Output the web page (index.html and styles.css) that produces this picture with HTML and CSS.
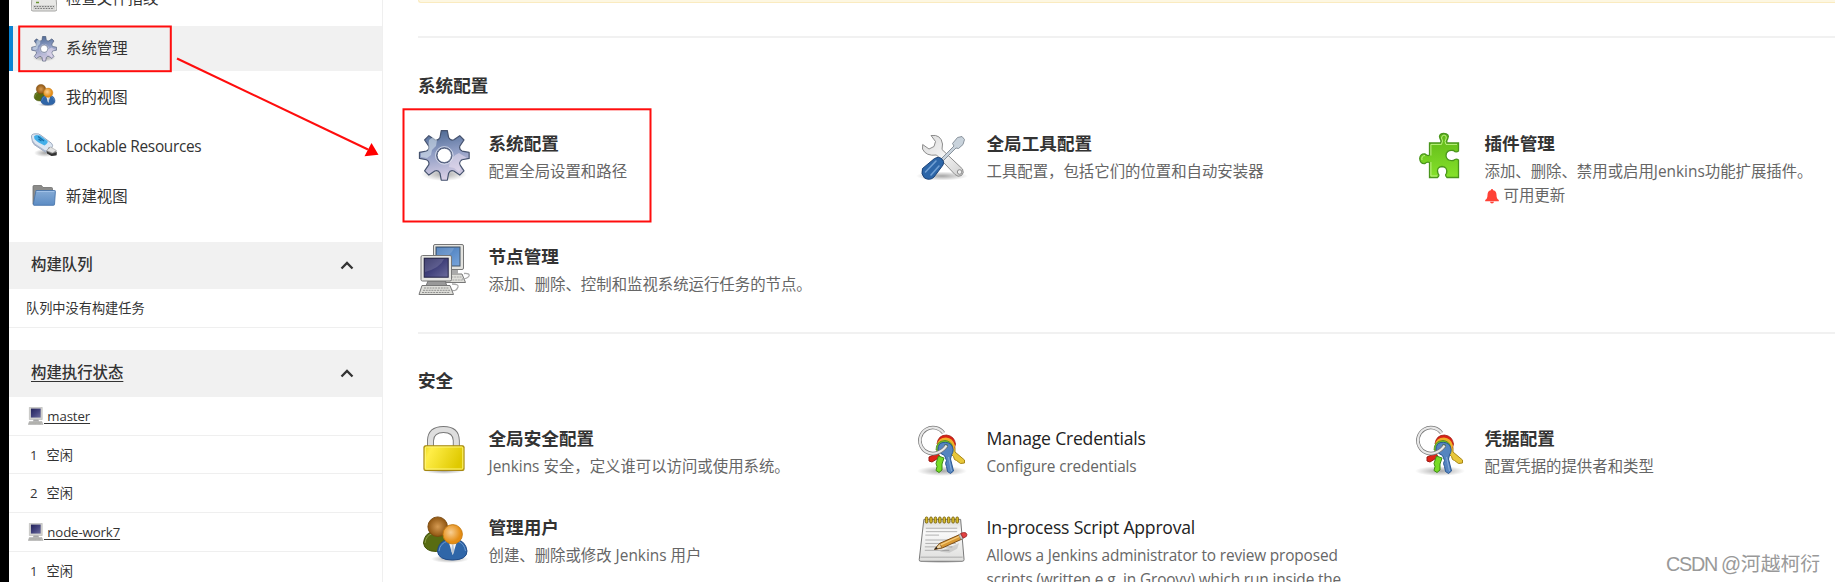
FILE: index.html
```html
<!DOCTYPE html>
<html lang="zh-CN">
<head>
<meta charset="utf-8">
<title>系统管理 [Jenkins]</title>
<link rel="stylesheet" href="styles.css">
</head>
<body>
<svg class="defs" width="0" height="0" aria-hidden="true">
  <defs>
    <linearGradient id="gGear" x1="0" y1="0" x2="0.15" y2="1"><stop offset="0" stop-color="#46648f"/><stop offset=".5" stop-color="#8f9dc4"/><stop offset="1" stop-color="#d6cde4"/></linearGradient>
    <linearGradient id="gBlue" x1="0" y1="0" x2="1" y2="1"><stop offset="0" stop-color="#3f73b4"/><stop offset="1" stop-color="#78a5dc"/></linearGradient>
    <linearGradient id="gFolder" x1="0" y1="0" x2="0" y2="1"><stop offset="0" stop-color="#85abd6"/><stop offset="1" stop-color="#5c8cc4"/></linearGradient>
    <linearGradient id="gNavy" x1="0" y1="0" x2="1" y2="1"><stop offset="0" stop-color="#23235a"/><stop offset=".5" stop-color="#42427c"/><stop offset="1" stop-color="#6c6c9c"/></linearGradient>
    <linearGradient id="gSteel" x1="0" y1="0" x2="1" y2="1"><stop offset="0" stop-color="#d9d9d9"/><stop offset=".5" stop-color="#f3f3f3"/><stop offset="1" stop-color="#cfcfcf"/></linearGradient>
    <linearGradient id="gGold" x1="0" y1="0" x2="1" y2=".3"><stop offset="0" stop-color="#e9d51c"/><stop offset=".2" stop-color="#ffee48"/><stop offset="1" stop-color="#dfc900"/></linearGradient>
    <linearGradient id="gGreen" x1="0" y1="0" x2="0" y2="1"><stop offset="0" stop-color="#5fb717"/><stop offset="1" stop-color="#86e22b"/></linearGradient>
    <linearGradient id="gPage" x1="0" y1="0" x2="0" y2="1"><stop offset="0" stop-color="#d8d8d6"/><stop offset=".3" stop-color="#fafafa"/><stop offset="1" stop-color="#dededc"/></linearGradient>
    <radialGradient id="gBrown"><stop offset="0" stop-color="#d59a52"/><stop offset="1" stop-color="#8f5510"/></radialGradient>
    <radialGradient id="gOrange" cx=".4" cy=".4"><stop offset="0" stop-color="#f8cf94"/><stop offset="1" stop-color="#e58d14"/></radialGradient>
    <radialGradient id="gShadow"><stop offset="0" stop-color="#000" stop-opacity=".35"/><stop offset="1" stop-color="#000" stop-opacity="0"/></radialGradient>
  </defs>
  <symbol id="gear" viewBox="0 0 52 52">
    <ellipse cx="26" cy="44" rx="23" ry="7" fill="url(#gShadow)"/>
    <path transform="translate(26.3 25.4) scale(1.08)" fill="url(#gGear)" stroke="#46536f" stroke-width="1.1" stroke-linejoin="round" fill-rule="evenodd" d="M-4-16.5L-2.8-23H2.8L4-16.5Q5.5-13.3 8.84-14.5L14.28-18.24 18.24-14.28 14.5-8.84Q13.3-5.5 16.5-4L23-2.8V2.8L16.5 4Q13.3 5.5 14.5 8.84L18.24 14.28 14.28 18.24 8.84 14.5Q5.5 13.3 4 16.5L2.8 23H-2.8L-4 16.5Q-5.5 13.3-8.84 14.5L-14.28 18.24-18.24 14.28-14.5 8.84Q-13.3 5.5-16.5 4L-23 2.8V-2.8L-16.5-4Q-13.3-5.5-14.5-8.84L-18.24-14.28-14.28-18.24-8.84-14.5Q-5.5-13.3-4-16.5ZM7 0A7 7 0 1 0-7 0A7 7 0 1 0 7 0Z"/>
    <path d="M3 23l7-2 1-11 4-3 4 3-1 6 -4 4 -1 5-4 3-6-1z" fill="#dbe7f0" opacity=".55"/>
    <path d="M49 28l-6 1-2 4 2 6-2 3-5-4-5-1q0-10 10-14z" fill="#efe4f4" opacity=".5"/>
    <circle cx="26.3" cy="25.4" r="8.8" fill="none" stroke="#e8ecf5" stroke-width="1" opacity=".7"/>
    <circle cx="26.3" cy="25.4" r="7.2" fill="#fff" stroke="#5a6685" stroke-width="1"/>
  </symbol>
  <symbol id="users" viewBox="0 0 52 52">
    <ellipse cx="32" cy="45" rx="19" ry="4" fill="url(#gShadow)"/>
    <path d="M5.500 29q1-10 9-11h8q8 1 9 11-1 8.500-13 8.500T5.500 29z" fill="#586c12" stroke="#3f5008"/>
    <path d="M7 29q1-8 8-9.500" fill="none" stroke="#8a9c45"/>
    <circle cx="19.700" cy="12.700" r="9.800" fill="url(#gBrown)" stroke="#7a4a10" stroke-width=".9"/>
    <path d="M19.500 37q1-10 10-11h10q8 1 9.500 11 0 9-14.500 9T19.500 37z" fill="#2f66a8" stroke="#1f4a87"/>
    <path d="M21 37q1-8 9-10M47.500 37q-1-7-7-9.500" fill="none" stroke="#6c9bd2"/>
    <path d="M31 29h7.500l-3.800 12z" fill="#f4f4f4"/><path d="M34 31h1.500l.8 6-1.500 4-1.600-4z" fill="#bcc7d5"/>
    <circle cx="34.700" cy="20.300" r="9.700" fill="url(#gOrange)" stroke="#c47a13" stroke-width=".9"/>
  </symbol>
  <symbol id="computer" viewBox="0 0 40 46">
    <path d="M3 1h33v31H3z" fill="#d4d4d0" stroke="#999"/><path d="M7 4h25v23H7z" fill="url(#gNavy)"/>
    <path d="M14 32h12l2 5H12z" fill="#aaa"/><path d="M3 37h32l3 8H0z" fill="#bdbdb9" stroke="#999"/>
    <path d="M4 40h28M3 43h30" stroke="#888" stroke-dasharray="2 1"/>
  </symbol>
  <symbol id="nodes" viewBox="0 0 52 52">
    <path d="M25 31h19l3.500 8.500H28z" fill="#deded9" stroke="#777"/><path d="M28 34h16M29 37h16" stroke="#999" stroke-width=".8" stroke-dasharray="2 .7"/>
    <path d="M30 26h10v5H30z" fill="#aaa"/>
    <rect x="15.500" y="1.500" width="30" height="25" rx="1.500" fill="#e3e3df" stroke="#777"/>
    <rect x="18" y="4" width="24" height="19" fill="url(#gBlue)" stroke="#456"/><path d="M19 5h17q-3 9-17 12z" fill="#fff" opacity=".15"/>
    <path d="M46 30.500q6-.5 5 2.500-2 3-7 3" fill="none" stroke="#aaa" stroke-width="1.300"/>
    <path d="M10 38h17l2 5H8z" fill="#999" stroke="#777"/>
    <rect x="3" y="12.500" width="30.500" height="25.500" rx="1.500" fill="#e7e7e3" stroke="#777"/>
    <rect x="6.200" y="15.200" width="24" height="19" fill="url(#gNavy)" stroke="#224"/><path d="M7 16h19q-4 9-19 13z" fill="#fff" opacity=".15"/>
    <path d="M34 41q7 0 6 3-2 5-6 3" fill="none" stroke="#aaa" stroke-width="1.300"/>
    <path d="M4 42.500h28l3.500 9H1z" fill="#deded9" stroke="#777"/><path d="M6 45h25M5 47.300h27M4 49.500h28" stroke="#888" stroke-width=".9" stroke-dasharray="2 .8"/>
  </symbol>
  <symbol id="tools" viewBox="0 0 52 52">
    <ellipse cx="26" cy="46" rx="26" ry="4.500" fill="url(#gShadow)"/>
    <path d="M15 5.500Q25 4 26.500 14L26 19.500 46.500 39Q48.500 43 45.500 45.500 42 47.500 39 44.500L20.500 25Q10 26.500 6.500 19L6.700 14.500 13 19 18 16.500 19.500 11.500z" fill="url(#gSteel)" stroke="#8d8d8d" stroke-width="1" stroke-linejoin="round"/>
    <circle cx="43.600" cy="42" r="2.300" fill="#eee" stroke="#8d8d8d"/>
    <path d="M25 29L38 16 36.500 13.500 41.500 7.500 46 6.500 48.500 9.500 47 14.500 42.500 18.500 40 18 27 31z" fill="#c9d3dc" stroke="#7f8993" stroke-width=".9"/>
    <path d="M18.500 28.500q4-2.500 7 0 3.500 3 1.500 6.500l-9 12q-4 4-9.500 1-4-4-2-9.500z" fill="#2d66a8" stroke="#1d4377"/>
    <path d="M9.500 42L20 31M15 45l8-9" stroke="#82aede" stroke-width="1.600" stroke-linecap="round" opacity=".8"/>
  </symbol>
  <symbol id="puzzle" viewBox="0 0 52 52">
    <path d="M15.500 13H26.500Q28 11 26 8.500 24 4 29.500 3.500 36 4 33.800 8.500 32 11 33 13H44.500V21Q42 23 39.500 20.500 32 19.500 32 26 33 31.500 39.500 30.500 42 28 44.500 30V47.500H33Q30.500 45 32.500 43.500 34 37 28 36.500 22 37 24 43.500 26 45.500 23.500 47.500H15.500V32.500Q13 31.500 11 33.500 6 34 5.700 28.500 6 23.500 11 24 14 26.500 15.500 25z" fill="url(#gGreen)" stroke="#4a961c" stroke-width="1.300"/>
    <path d="M16.900 25.500V14.400H27.500Q29.500 11 27.500 8 28 5 30 5 32.500 5 32.300 8 30 12 32 14.400H43M16.900 32V46H23M8 30q-1-4 3-4.500" fill="none" stroke="#c6f58c" stroke-width=".9"/>
  </symbol>
  <symbol id="lock" viewBox="0 0 52 52">
    <ellipse cx="26" cy="46" rx="20" ry="3" fill="url(#gShadow)"/>
    <path d="M12.500 23V15.500Q13 4.500 25.500 4.500 38 4.500 38.300 15.500V23" fill="none" stroke="#777" stroke-width="7"/>
    <path d="M12.500 23V15.500Q13 4.500 25.500 4.500 38 4.500 38.300 15.500V23" fill="none" stroke="#dedede" stroke-width="5.200"/>
    <rect x="6" y="20.800" width="40" height="24.600" rx="1.500" fill="url(#gGold)" stroke="#a48712" stroke-width="1.200"/>
    <rect x="7.300" y="22" width="37.500" height="22" rx="1" fill="none" stroke="#fff57d"/>
  </symbol>
  <symbol id="keys" viewBox="0 0 52 52">
    <ellipse cx="26" cy="46" rx="25" ry="5" fill="url(#gShadow)"/>
    <path d="M22 28l-9 4 0 4 3 1 8-5z" fill="#e02418" stroke="#9c1710"/>
    <path d="M34 21q4-2 5 2l0 4 9.500 8 0 3-4 .5-4-3-2-1-1-3-4-4z" fill="#e8c73a" stroke="#a98716"/>
    <path d="M21 19q1-9 9.500-9 8 1 9 9l-1 4-6-4z" fill="#d92315" stroke="#a01912" stroke-width=".8"/>
    <path d="M21 20q1-7.500 9-7.500 7 .5 9 8l-1 5-8-6z" fill="#efaf28"/>
    <path d="M20 25q0-9 9-9.500 6 .5 7.500 6l-8 8z" fill="#79c825" stroke="#4b8b18" stroke-width=".8"/>
    <path d="M22.500 31l5.500 2-2 6 0 6-3 2.500-3-2 1-4-1-3z" fill="#77dc25" stroke="#3f8c15"/>
    <path d="M24 18.500q6-3 11 1 4 5 .5 10.500l-1 4 3 12-3 2.500-3-2-1-5-1-3 1-3-2-5q-5-2-6.500-5.500-.5-4 2-6.500z" fill="#5585c0" stroke="#285692"/>
    <path d="M32.500 32l3 14" stroke="#85abd9" stroke-width="1"/>
    <circle cx="30" cy="21" r="2" fill="#456d58"/>
    <path d="M27.500 8A13 13 0 1 0 22 27.500Q28 25 30.500 20.500" fill="none" stroke="#777" stroke-width="3.600"/>
    <path d="M27.500 8A13 13 0 1 0 22 27.500Q28 25 30.500 20.500" fill="none" stroke="#e8e8e8" stroke-width="2.200"/>
  </symbol>
  <symbol id="notepad" viewBox="0 0 53 52">
    <ellipse cx="26" cy="47.500" rx="24" ry="2.500" fill="url(#gShadow)"/>
    <path d="M8 5h37.500L49 46q0 1.700-2 1.700H5q-2 0-1.700-1.700z" fill="url(#gPage)" stroke="#777"/>
    <path d="M4.500 43.500h43" stroke="#aaa"/>
    <path d="M10 14h32M10 17.500h32M9.500 21h14M9.500 26h31M9.500 29.500h31M9 33h28M9 36.500h25" stroke="#a8a8a8" stroke-width=".9"/>
    <g fill="#d9bd2b" stroke="#79630b" stroke-width=".9"><rect x="9.500" y="2.500" width="2.600" height="6.300" rx="1.300"/><rect x="14" y="2.500" width="2.600" height="6.300" rx="1.300"/><rect x="18.500" y="2.500" width="2.600" height="6.300" rx="1.300"/><rect x="23" y="2.500" width="2.600" height="6.300" rx="1.300"/><rect x="27.500" y="2.500" width="2.600" height="6.300" rx="1.300"/><rect x="32" y="2.500" width="2.600" height="6.300" rx="1.300"/><rect x="36.500" y="2.500" width="2.600" height="6.300" rx="1.300"/><rect x="40.700" y="2.500" width="2.600" height="6.300" rx="1.300"/></g>
    <path d="M24 38l20-9-2 6-8 4z" fill="#000" opacity=".12"/>
    <path d="M19 35.500l5-6 20.500-9 2.500 4.500-20 9z" fill="#d99a35" stroke="#7a4a12"/>
    <path d="M19 35.500l5-6 2.500 4.500z" fill="#efd6a8" stroke="#7a4a12" stroke-width=".7"/><path d="M18.500 35.800l2.400-3 1.200 2z" fill="#222"/>
    <path d="M25 31l20-9" stroke="#f6cd7e" stroke-width="1.200"/>
    <path d="M43.500 20.600l2-1 2.500 4.700-2.200 1.100z" fill="#ccc" stroke="#777" stroke-width=".6"/><path d="M45.500 19.400q3-1.700 5.300-.7 2 1.700.5 3.700l-3.200 1.700z" fill="#e34242" stroke="#8d2222" stroke-width=".8"/>
  </symbol>
  <symbol id="usb" viewBox="0 0 26 24">
    <ellipse cx="14" cy="20" rx="11" ry="4" fill="url(#gShadow)"/>
    <path d="M.5 4Q0 1 4 .8q4-.5 6 1.500l10.500 8q2 2 .5 4l-3 4.500q-1.500 1.500-4 0L3 11.500Q1 9 .5 4z" fill="#dce6f2" stroke="#8998b0" stroke-width=".8"/>
    <path d="M1.300 8l2.200 3 10.500 7 3 0" fill="none" stroke="#a9b5ca" stroke-width="1.300"/>
    <path d="M3 3.500q1-2.500 6-1L16.500 8q1 1-1 3l-2 1.500Q6 9 3.500 6z" fill="#43afe9"/>
    <path d="M7 3.500l6 4.500M7.500 6l3 2" stroke="#146da8" stroke-width="1.200"/>
    <path d="M18 14l8 5-.5 3.500-4.500.5-6-4z" fill="#777"/><path d="M15.500 17.500l4-3.500 6 3.500-4 2.500z" fill="#e3e3e3" stroke="#999" stroke-width=".5"/><path d="M16 18.500l4.500 2.300 5-1.300v2.500l-5 1-4.500-2.500z" fill="#333"/>
  </symbol>
  <symbol id="folder" viewBox="0 0 24 21">
    <path d="M1 1.500q0-1 1-1h7.500l1.500 2H19.500q1 0 1 1V19H1z" fill="#8b8b89" stroke="#70706e" stroke-width=".8"/>
    <path d="M4 5.500h18.700q.8 0 .7.900L22.500 19.500q0 .8-1 .8H2q-.8 0-.7-1z" fill="url(#gFolder)" stroke="#4a76ac" stroke-width=".9"/>
    <path d="M4.600 6.500h17.600" stroke="#a8c8ec" stroke-width=".8"/>
  </symbol>
  <symbol id="print" viewBox="0 0 26 26">
    <path d="M2 0h22l2 23q0 2-2 2H2q-2 0-2-2z" fill="#e8e8e6" stroke="#a5a5a3"/>
    <path d="M2 19h22v4.500H2z" fill="#d4d4d2"/><path d="M3 20.500h20M4 22.500h18" stroke="#777" stroke-dasharray="1.500 1.200"/><path d="M5 16.500h3" stroke="#6a9430" stroke-width="1.500"/>
  </symbol>
  <symbol id="chevron" viewBox="0 0 14 9"><path d="M1.500 7.500L7 2l5.500 5.500" fill="none" stroke="#333" stroke-width="2.300"/></symbol>
  <symbol id="bell" viewBox="0 0 14 15"><path d="M7 0q1 0 1.200 1.200Q11.500 2 11.500 6q0 4 2.300 5v1.300H.2V11q2.300-1 2.300-5 0-4 3.300-4.800Q6 0 7 0zM5 12.800h4Q8.800 14.600 7 14.600T5 12.800z" fill="#ff4136"/></symbol>
</svg>

<div class="page">
  <aside class="sidebar">
    <nav class="tasks">
      <a class="task"><svg class="task-icon"><use href="#print"/></svg><span>检查文件指纹</span></a>
      <a class="task task-active"><svg class="task-icon"><use href="#gear"/></svg><span>系统管理</span></a>
      <a class="task"><svg class="task-icon task-icon-users"><use href="#users"/></svg><span>我的视图</span></a>
      <a class="task"><svg class="task-icon task-icon-up"><use href="#usb"/></svg><span class="task-latin">Lockable Resources</span></a>
      <a class="task"><svg class="task-icon task-icon-folder"><use href="#folder"/></svg><span>新建视图</span></a>
    </nav>
    <section class="pane queue">
      <header class="pane-header"><span>构建队列</span><svg class="chevron"><use href="#chevron"/></svg></header>
      <div class="pane-row queue-empty">队列中没有构建任务</div>
    </section>
    <section class="pane">
      <header class="pane-header"><a class="underlined">构建执行状态</a><svg class="chevron"><use href="#chevron"/></svg></header>
      <div class="pane-row node"><svg class="node-icon"><use href="#computer"/></svg><a class="node-link">&nbsp;master</a></div>
      <div class="pane-row executor executor-short"><span class="number">1</span><span>空闲</span></div>
      <div class="pane-row executor"><span class="number">2</span><span>空闲</span></div>
      <div class="pane-row node"><svg class="node-icon"><use href="#computer"/></svg><a class="node-link">&nbsp;node-work7</a></div>
      <div class="pane-row executor"><span class="number">1</span><span>空闲</span></div>
    </section>
  </aside>

  <main class="main">
    <div class="alert"></div>
    <section class="section">
      <h2 class="section-title">系统配置</h2>
      <div class="grid">
        <a class="item"><svg class="item-icon"><use href="#gear"/></svg><div class="item-text"><div class="item-title">系统配置</div><div class="item-desc">配置全局设置和路径</div></div></a>
        <a class="item"><svg class="item-icon"><use href="#tools"/></svg><div class="item-text"><div class="item-title">全局工具配置</div><div class="item-desc">工具配置，包括它们的位置和自动安装器</div></div></a>
        <a class="item"><svg class="item-icon"><use href="#puzzle"/></svg><div class="item-text"><div class="item-title">插件管理</div><div class="item-desc">添加、删除、禁用或启用Jenkins功能扩展插件。</div><div class="item-desc update"><svg class="bell"><use href="#bell"/></svg><span>可用更新</span></div></div></a>
        <a class="item"><svg class="item-icon"><use href="#nodes"/></svg><div class="item-text"><div class="item-title">节点管理</div><div class="item-desc">添加、删除、控制和监视系统运行任务的节点。</div></div></a>
      </div>
    </section>
    <section class="section section-security">
      <h2 class="section-title">安全</h2>
      <div class="grid">
        <a class="item"><svg class="item-icon"><use href="#lock"/></svg><div class="item-text"><div class="item-title">全局安全配置</div><div class="item-desc">Jenkins 安全，定义谁可以访问或使用系统。</div></div></a>
        <a class="item"><svg class="item-icon"><use href="#keys"/></svg><div class="item-text"><div class="item-title item-title-latin">Manage Credentials</div><div class="item-desc item-desc-latin">Configure credentials</div></div></a>
        <a class="item"><svg class="item-icon"><use href="#keys"/></svg><div class="item-text"><div class="item-title">凭据配置</div><div class="item-desc">配置凭据的提供者和类型</div></div></a>
        <a class="item"><svg class="item-icon"><use href="#users"/></svg><div class="item-text"><div class="item-title">管理用户</div><div class="item-desc">创建、删除或修改 Jenkins 用户</div></div></a>
        <a class="item"><svg class="item-icon"><use href="#notepad"/></svg><div class="item-text"><div class="item-title item-title-latin">In-process Script Approval</div><div class="item-desc item-desc-latin">Allows a Jenkins administrator to review proposed<br>scripts (written e.g. in Groovy) which run inside the</div></div></a>
      </div>
    </section>
  </main>
</div>

<svg class="annotations" width="1835" height="582" viewBox="0 0 1835 582">
  <rect x="19.200" y="26.500" width="151.600" height="44.700" fill="none" stroke="#ff0d0d" stroke-width="2"/>
  <rect x="403.500" y="109.300" width="247" height="112.200" fill="none" stroke="#ff0d0d" stroke-width="2"/>
  <path d="M177 58.500L368 149.500" stroke="#ff0d0d" stroke-width="2.100"/>
  <path d="M371.500 143L378.500 154.800 364.500 156.300z" fill="#f00"/>
</svg>
<div class="watermark"><span class="watermark-site">CSDN @</span>河越柯衍</div>
</body>
</html>
```
FILE: styles.css
```css
* { box-sizing: border-box; }
html, body { margin: 0; height: 582px; overflow: hidden; }
body {
  position: relative;
  background: #fff;
  color: #333;
  font-family: "Open Sans", "Noto Sans CJK SC", sans-serif;
  font-size: 15.4px;
  white-space: nowrap;
}
.defs { position: absolute; }
.page { display: flex; height: 582px; border-left: 9px solid #000; overflow: hidden; }

.sidebar { width: 374px; flex: none; border-right: 1px solid #efefef; }
.tasks { height: 242px; overflow: hidden; display: flex; flex-direction: column; justify-content: flex-end; gap: 4.3px; padding-bottom: 23px; }
.task { flex: none; height: 45px; display: flex; align-items: center; gap: 9px; padding-left: 22px; line-height: 24px; }
.task-active { background: #f1f1f1; border-left: 4px solid #0b84d3; padding-left: 18px; }
.task-latin { letter-spacing: -0.32px; }
.task-icon { width: 26px; height: 26px; flex: none; }
.task-icon-users { height: 25px; margin-bottom: 4px; }
.task-icon-up { height: 24px; margin-bottom: 5px; }
.task-icon-folder { height: 21px; margin-bottom: 2px; }

.queue { margin-bottom: 22px; }
.pane-header {
  height: 47px; display: flex; align-items: center; justify-content: space-between;
  padding: 0 28px 2px 22px; background: #f1f1f1; font-weight: 500; line-height: 24px;
}
.underlined { text-decoration: underline; text-underline-offset: 3px; text-decoration-thickness: 1px; }
.chevron { width: 14px; height: 9px; margin-top: 2px; }
.pane-row { height: 39px; display: flex; align-items: center; border-bottom: 1px solid #efefef; font-size: 13.2px; line-height: 20px; padding-left: 19px; }
.queue-empty { padding-left: 17px; }
.executor { padding-left: 21px; gap: 9px; }
.executor-short { height: 38px; }
.node-icon { width: 16px; height: 18px; }
.node-link { text-decoration: underline; text-underline-offset: 2px; letter-spacing: -0.1px; }

.main { flex: 1; padding-left: 35px; }
.alert { height: 3px; margin-bottom: 33px; border: solid #faebc0; border-width: 0 0 1px 1px; border-bottom-left-radius: 4px; background: #fdf7e2; }
.section { height: 296px; border-top: 2px solid #f1f1f1; padding-top: 35px; }
.section-security { padding-top: 34px; }
.section-title { margin: 0 0 34px; font-size: 17.6px; line-height: 24px; font-weight: 700; }
.grid { display: grid; grid-template-columns: repeat(3, 498px); row-gap: 37px; }
.item { display: flex; gap: 18.5px; align-items: flex-start; }
.item-icon { width: 52px; height: 52px; flex: none; margin-top: -1px; margin-bottom: -4px; }
.item-title { font-size: 17.6px; line-height: 24px; font-weight: 700; margin-bottom: 5px; }
.item-title-latin { font-weight: 400; letter-spacing: -0.22px; color: #222; }
.item-desc { color: #666; line-height: 24px; margin-bottom: -1px; }
.item-desc + .item-desc { margin-top: 1px; }
.item-desc-latin { letter-spacing: -0.15px; }
.update { display: flex; align-items: center; gap: 5px; }
.bell { width: 14px; height: 15px; }

.annotations { position: absolute; left: 0; top: 0; }
.watermark { position: absolute; right: 15px; bottom: 4px; font-size: 19.8px; line-height: 28px; font-family: "Liberation Sans", "Noto Sans CJK SC", sans-serif; color: #999; }
.watermark-site { letter-spacing: -1.3px; margin-right: 1px; }
```
